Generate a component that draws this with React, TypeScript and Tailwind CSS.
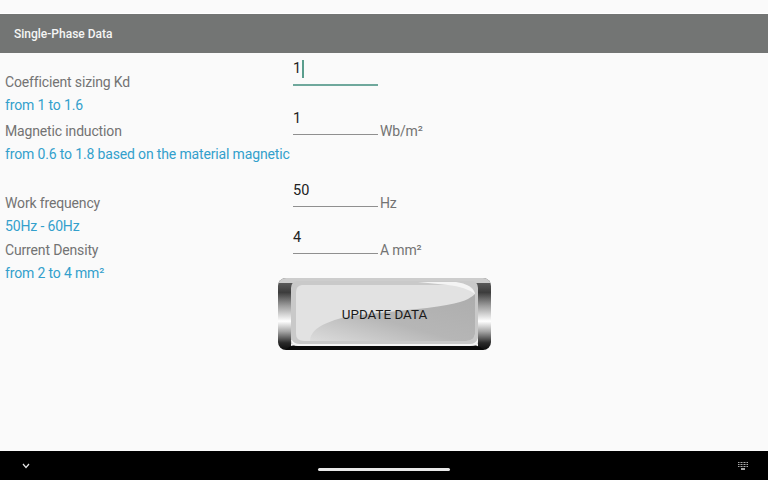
function Field({ label, hint, value, unit, top, focused }: { label: string; hint: string; value: string; unit?: string; top: string; focused?: boolean }) {
  return (
    <div className={`flex ${top}`}>
      <div className="w-[293px] shrink-0 pl-[5px]">
        <div className="h-[24px] text-[14px] tracking-[-0.15px] leading-[24px] text-[#737373]">{label}</div>
        <div className="h-[24px] text-[14px] tracking-[-0.15px] leading-[22px] text-[#33a0cc] whitespace-nowrap">{hint}</div>
      </div>
      <div className="flex items-start h-[24px]">
        <div className={`w-[85px] h-[32px] -mt-[16px] ${focused ? "border-b-2 border-[#6fa89c]" : "border-b border-[#8f8f8f]"}`}>
          <span className={`block text-[14.5px] leading-[20px] text-[#222] ${focused ? "pt-[5px]" : "pt-[6px]"}`}>
            {value}
            {focused && <span className="inline-block w-[2px] h-[18px] bg-[#5a9d8d] align-middle ml-[1px]" />}
          </span>
        </div>
        {unit && <span className="self-end mb-[2px] ml-[2px] text-[14px] tracking-[-0.15px] leading-[20px] text-[#737373]">{unit}</span>}
      </div>
    </div>
  );
}

function MetalButton() {
  return (
    <button className="relative block w-[213px] h-[72px] rounded-[8px] overflow-hidden bg-[linear-gradient(180deg,#6a6a6a_0%,#3c3c3c_20%,#9a9a9a_38%,#ffffff_60%,#a8a8a8_74%,#2a2a2a_90%,#0c0c0c_100%)]">
      <svg className="absolute inset-0 blur-[0.4px]" width="213" height="72" viewBox="0 0 213 72">
        <defs>
          <linearGradient id="shade" x1="0" y1="1" x2="1" y2="0">
            <stop offset="0" stopColor="#dcdcdc" />
            <stop offset="0.45" stopColor="#b6b6b6" />
            <stop offset="1" stopColor="#adadad" />
          </linearGradient>
        </defs>
        <path d="M6 0H207Q212 1 213 5H0Q1 1 6 0Z" fill="#cdcdcd" />
        <path d="M19 3H194Q200 4 200 10V66H13V10Q13 4 19 3Z" fill="#c9c9c9" />
        <path d="M13 66H200V72H13Z" fill="#f2f2f2" />
        <path d="M15 67.5H198Q202 68 206 72H8Q11 68 15 67.5Z" fill="#0a0a0a" />
        <path d="M14 62Q16 66 22 66H192Q198 66 200 60V64Q199 68 192 68H20Q14 68 13 62Z" fill="#f4f4f4" />
        <path d="M24 7H188Q196 9 197 16V56Q196 63 188 63H26Q18 63 18 56V14Q18 8 24 7Z" fill="#e2e2e2" />
        <path d="M32 63Q32 52 49 45Q65 38 82 37Q120 33 149 30Q172 27 182 24Q192 21 197 16V56Q196 63 188 63Z" fill="url(#shade)" />
        <path d="M140 4H178Q194 6 197 16Q188 9 170 7Z" fill="#f4f4f4" />
      </svg>
      <span className="relative text-[13.4px] text-[#1a1a1a]">UPDATE DATA</span>
    </button>
  );
}

export default function App() {
  return (
    <div className="w-[768px] h-[480px] overflow-hidden flex flex-col bg-[#fafafa] font-['Roboto',sans-serif]">
      <div className="h-[14px] shrink-0 border-b border-white" />
      <div className="h-[39px] shrink-0 flex items-center pl-[14px] bg-[#737574] text-[12px] font-medium text-[#f5f5f5]">Single-Phase Data</div>

      <div className="flex-1">
        <Field label="Coefficient sizing Kd" hint="from 1 to 1.6" value="1" top="pt-[17px]" focused />
        <Field label="Magnetic induction" hint="from 0.6 to 1.8 based on the material magnetic" value="1" unit="Wb/m²" top="pt-[1px]" />
        <Field label="Work frequency" hint="50Hz - 60Hz" value="50" unit="Hz" top="pt-[24px]" />
        <Field label="Current Density" hint="from 2 to 4 mm²" value="4" unit="A mm²" top="-mt-[1px]" />
        <div className="pl-[278px] -mt-[8px]">
          <MetalButton />
        </div>
      </div>

      <div className="h-[29px] shrink-0 flex items-center justify-between bg-black pl-[22px] pr-[20px] relative">
        <svg width="8" height="6" viewBox="0 0 8 6" fill="none" stroke="#e5e5e5" strokeWidth="1.2"><path d="M1 1L4 4.5L7 1" /></svg>
        <div className="absolute left-[318px] top-[17px] w-[132px] h-[3px] rounded-full bg-[#e8e8e8]" />
        <svg width="10" height="8" viewBox="0 0 10 8" fill="none" stroke="#a8a8a8"><path d="M0 .5H10M0 2.5H10M0 4.5H10" strokeDasharray="1 .5" /><path d="M3 7H7" stroke="#eee" strokeWidth="1.4" /></svg>
      </div>
    </div>
  );
}
